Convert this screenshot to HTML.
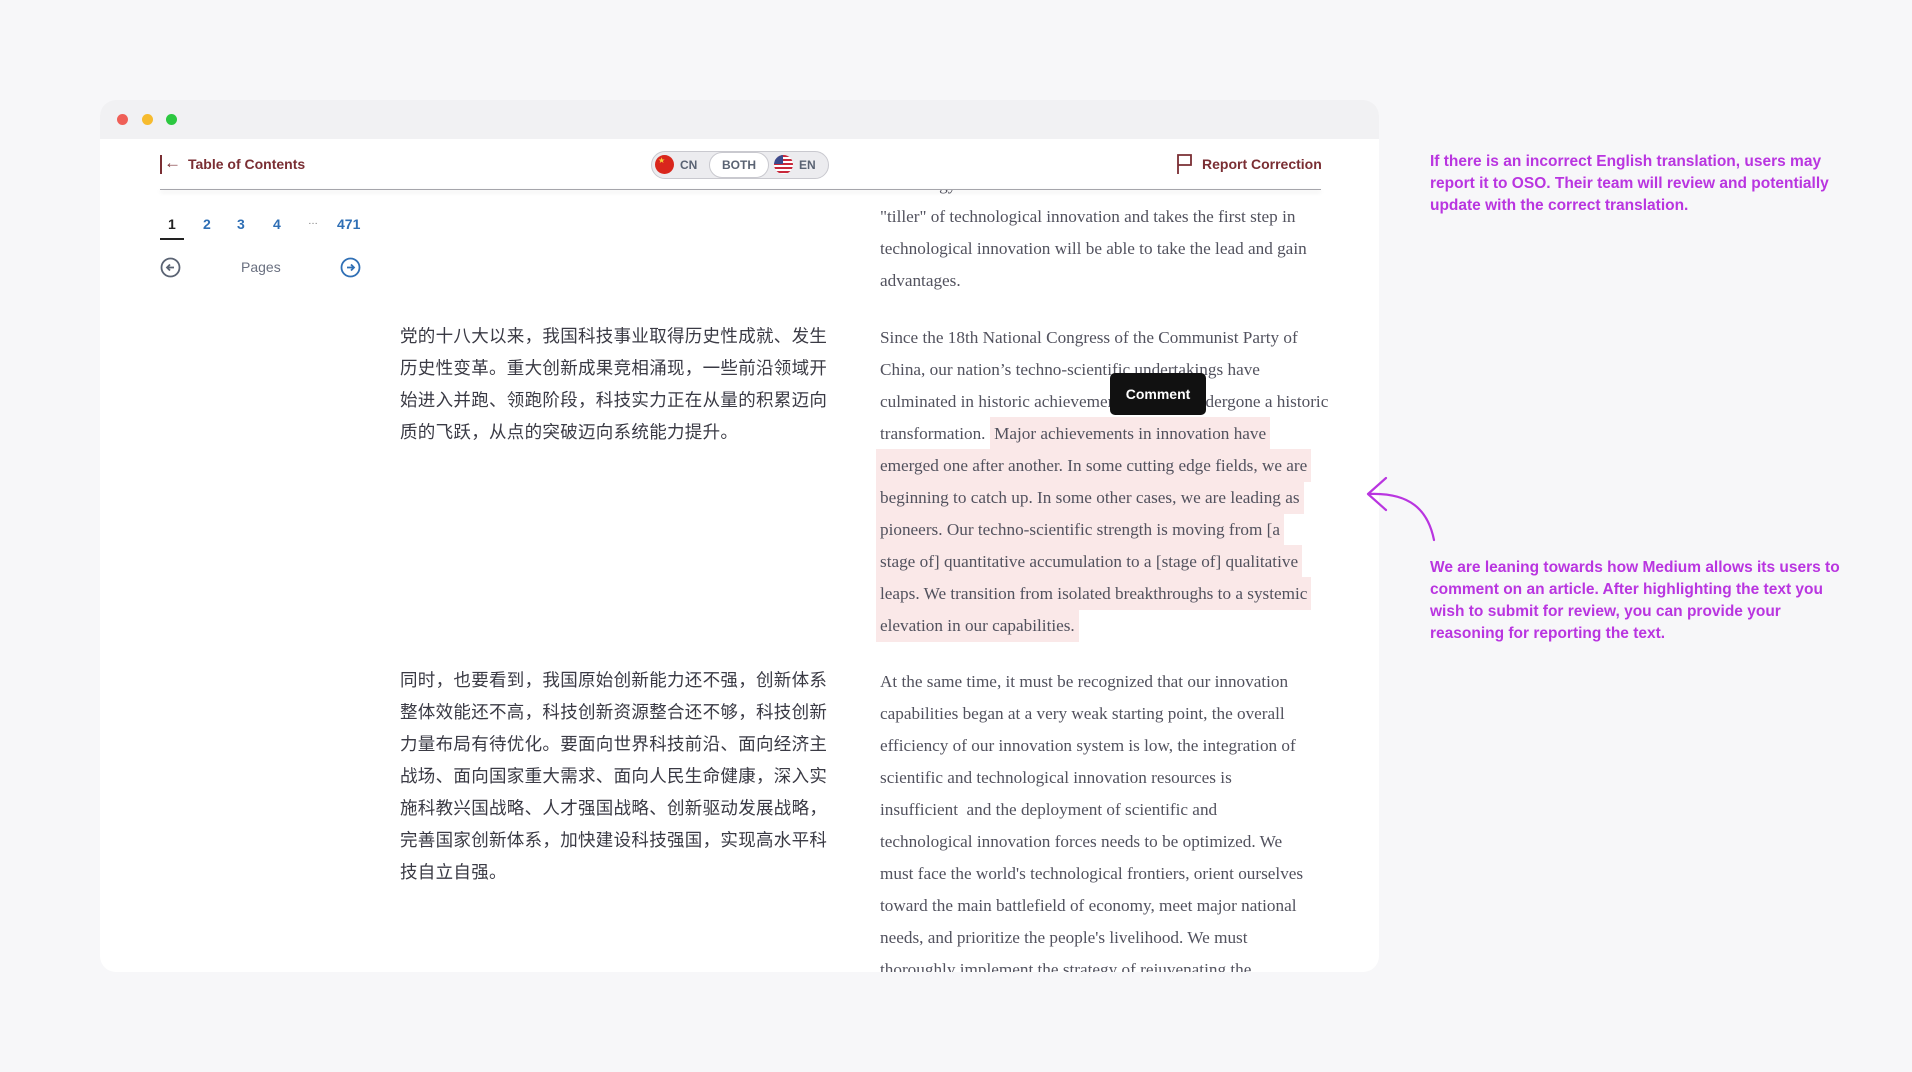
<!DOCTYPE html>
<html><head><meta charset="utf-8"><style>
*{margin:0;padding:0;box-sizing:border-box}
body{width:1912px;height:1072px;background:#f7f7f9;position:relative;overflow:hidden;font-family:"Liberation Sans",sans-serif}
.win{position:absolute;left:100px;top:100px;width:1279px;height:872px;background:#fff;border-radius:16px;overflow:hidden}
.tb{position:absolute;left:0;top:0;width:100%;height:39px;background:#f1f1f3}
.dot{position:absolute;top:14px;width:11px;height:11px;border-radius:50%}
.a{position:absolute;white-space:nowrap}
.en{position:absolute;left:780px;font-family:"Liberation Serif",serif;font-size:17.2px;line-height:32px;color:#52525e;white-space:pre}
.cn{position:absolute;left:300px;font-family:"Liberation Sans","Noto Sans CJK SC",sans-serif;font-size:17.5px;letter-spacing:0.3px;line-height:32px;color:#3a3a44;white-space:pre}
.hl{background:#fae8e8;padding:7px 4px;margin:0 -4px;-webkit-box-decoration-break:clone;box-decoration-break:clone}
.hdr{position:absolute;left:0;top:39px;width:100%;height:51px;background:#fff;z-index:2}
.note{position:absolute;left:1430px;color:#b935e0;font-weight:bold;font-size:15.5px;line-height:22px;white-space:pre}
</style></head><body>
<div class="win">
 <div class="tb"></div>
 <div class="dot" style="left:17px;background:#ef5f57"></div>
 <div class="dot" style="left:42px;background:#f6bb2e"></div>
 <div class="dot" style="left:66px;background:#2cc840"></div>
 <div class="hdr">
  <div class="a" style="left:60px;top:16px;width:2px;height:19px;background:#7a2e33"></div>
  <div class="a" style="left:64px;top:14px;color:#7a2e33;font-size:17px">←</div>
  <div class="a" style="left:88px;top:17px;color:#7a2e33;font-weight:bold;font-size:14px">Table of Contents</div>
  <div class="a" style="left:551px;top:12px;width:178px;height:28px;border:1px solid #c9c9cf;border-radius:14px;background:#ececef"></div>
  <div class="a" style="left:555px;top:16px;width:19px;height:19px;border-radius:50%;background:#d9261c"></div>
  <div class="a" style="left:558px;top:17px;color:#f7d238;font-size:8px">★</div>
  <div class="a" style="left:580px;top:19px;color:#5a6373;font-size:12px;font-weight:bold">CN</div>
  <div class="a" style="left:609px;top:13px;width:60px;height:26px;border:1px solid #c9c9cf;border-radius:13px;background:#fff;text-align:center;line-height:24px;color:#5a6373;font-size:12px;font-weight:bold">BOTH</div>
  <div class="a" style="left:674px;top:16px;width:19px;height:19px;border-radius:50%;background:repeating-linear-gradient(#c8283a 0 2px,#fff 2px 4px);overflow:hidden"><div style="width:9px;height:9px;background:#3b4a8c"></div></div>
  <div class="a" style="left:699px;top:19px;color:#5a6373;font-size:12px;font-weight:bold">EN</div>
  <svg class="a" style="left:1076px;top:14px" width="18" height="22" viewBox="0 0 18 22"><path d="M2 21V2h13v10H2" fill="none" stroke="#7a2e33" stroke-width="1.8"/></svg>
  <div class="a" style="left:1102px;top:17px;color:#7a2e33;font-weight:bold;font-size:14px">Report Correction</div>
  <div class="a" style="left:60px;top:50px;width:1161px;height:1px;background:#a5a5ab;box-shadow:0 2px 4px rgba(0,0,0,.15)"></div>
 </div>
 <div class="a" style="left:68px;top:116px;font-size:14px;font-weight:bold;color:#222">1</div>
 <div class="a" style="left:60px;top:138px;width:24px;height:2px;background:#222"></div>
 <div class="a" style="left:103px;top:116px;font-size:14px;font-weight:bold;color:#2f6fb5">2</div>
 <div class="a" style="left:137px;top:116px;font-size:14px;font-weight:bold;color:#2f6fb5">3</div>
 <div class="a" style="left:173px;top:116px;font-size:14px;font-weight:bold;color:#2f6fb5">4</div>
 <div class="a" style="left:208px;top:116px;font-size:10px;color:#777">…</div>
 <div class="a" style="left:237px;top:116px;font-size:14px;font-weight:bold;color:#2f6fb5">471</div>
 <svg class="a" style="left:60px;top:157px" width="21" height="21" viewBox="0 0 21 21"><circle cx="10.5" cy="10.5" r="9" fill="none" stroke="#5a6373" stroke-width="1.8"/><path d="M14 10.5H7M10 7.5l-3 3 3 3" fill="none" stroke="#5a6373" stroke-width="1.8"/></svg>
 <div class="a" style="left:141px;top:159px;font-size:14px;color:#6a7080">Pages</div>
 <svg class="a" style="left:240px;top:157px" width="21" height="21" viewBox="0 0 21 21"><circle cx="10.5" cy="10.5" r="9" fill="none" stroke="#2f6fb5" stroke-width="1.8"/><path d="M7 10.5h7M11 7.5l3 3-3 3" fill="none" stroke="#2f6fb5" stroke-width="1.8"/></svg>

<div class="cn" style="top:220px">党的十八大以来，我国科技事业取得历史性成就、发生
历史性变革。重大创新成果竞相涌现，一些前沿领域开
始进入并跑、领跑阶段，科技实力正在从量的积累迈向
质的飞跃，从点的突破迈向系统能力提升。</div>
<div class="cn" style="top:564px">同时，也要看到，我国原始创新能力还不强，创新体系
整体效能还不高，科技创新资源整合还不够，科技创新
力量布局有待优化。要面向世界科技前沿、面向经济主
战场、面向国家重大需求、面向人民生命健康，深入实
施科教兴国战略、人才强国战略、创新驱动发展战略，
完善国家创新体系，加快建设科技强国，实现高水平科
技自立自强。</div>

<div class="en" style="top:69px">technology innovation will be the leader and the
"tiller" of technological innovation and takes the first step in
technological innovation will be able to take the lead and gain
advantages.</div>
<div class="en" style="top:222px">Since the 18th National Congress of the Communist Party of
China, our nation’s techno-scientific undertakings have
culminated in historic achievements and has undergone a historic
transformation.  <span class="hl">Major achievements in innovation have
emerged one after another. In some cutting edge fields, we are
beginning to catch up. In some other cases, we are leading as
pioneers. Our techno-scientific strength is moving from [a
stage of] quantitative accumulation to a [stage of] qualitative
leaps. We transition from isolated breakthroughs to a systemic
elevation in our capabilities.</span></div>
<div class="en" style="top:566px">At the same time, it must be recognized that our innovation
capabilities began at a very weak starting point, the overall
efficiency of our innovation system is low, the integration of
scientific and technological innovation resources is
insufficient  and the deployment of scientific and
technological innovation forces needs to be optimized. We
must face the world's technological frontiers, orient ourselves
toward the main battlefield of economy, meet major national
needs, and prioritize the people's livelihood. We must
thoroughly implement the strategy of rejuvenating the</div>
 <div class="a" style="left:1010px;top:273px;width:96px;height:42px;background:#111;border-radius:5px;color:#fff;font-weight:bold;font-size:14px;text-align:center;line-height:42px;z-index:3">Comment</div>
</div>
<div class="note" style="top:151px">If there is an incorrect English translation, users may
report it to OSO. Their team will review and potentially
update with the correct translation.</div>
<div class="note" style="top:557px">We are leaning towards how Medium allows its users to
comment on an article. After highlighting the text you
wish to submit for review, you can provide your
reasoning for reporting the text.</div>
<svg class="a" style="left:1360px;top:470px" width="100" height="80" viewBox="0 0 100 80"><path d="M74 70C68 40 50 22 8 24M8 24l18-16M8 24l18 16" fill="none" stroke="#b935e0" stroke-width="2.2" stroke-linecap="round"/></svg>
</body></html>
